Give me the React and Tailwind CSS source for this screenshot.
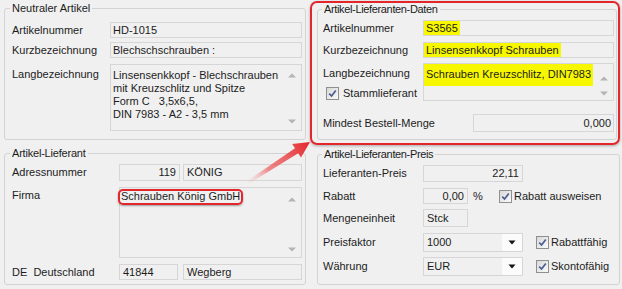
import React from "react";

const Check = () => (
  <span className="inline-flex w-[13px] h-[13px] shrink-0 items-center justify-center border border-[#8e8f8f] bg-gradient-to-br from-[#d8d8d8] to-[#fafafa]">
    <svg width="9" height="9" viewBox="0 0 9 9">
      <path d="M1.2 4.6 L3.6 7 L7.8 1.4" fill="none" stroke="#4b5f8f" strokeWidth="1.7" />
    </svg>
  </span>
);

const Up = () => (
  <svg width="8" height="5" viewBox="0 0 8 5"><path d="M0 4.5 L4 0.5 L8 4.5 Z" fill="#b4b4b4" /></svg>
);
const Down = () => (
  <svg width="8" height="5" viewBox="0 0 8 5"><path d="M0 0.5 L4 4.5 L8 0.5 Z" fill="#b4b4b4" /></svg>
);

const Scroll = ({ pt = "pt-[8px]", pb = "pb-[6px]" }) => (
  <div className={`w-[18px] flex flex-col justify-between items-center ${pt} ${pb}`}>
    <Up />
    <Down />
  </div>
);

const Field = ({ className = "", children }) => (
  <div className={`border border-[#d6d6d6] bg-[#f0f0f0] flex items-center ${className}`}>{children}</div>
);

const Combo = ({ value }) => (
  <div className="w-[100px] h-[19px] border border-[#d6d6d6] flex">
    <div className="flex-1 bg-[#f0f0f0] flex items-center pl-[3px]">{value}</div>
    <div className="w-[20px] bg-[#fbfbfb] flex items-center justify-center">
      <svg width="8" height="5" viewBox="0 0 8 5"><path d="M0.5 0.5 L4 4.5 L7.5 0.5 Z" fill="#111" /></svg>
    </div>
  </div>
);

export default function App() {
  return (
    <div className="relative w-[622px] h-[289px] bg-[#f0f0f0] text-[11px] leading-[13px] text-[#1c1c1c] font-['Liberation_Sans',Arial,sans-serif] flex overflow-hidden">
      {/* Left column */}
      <div className="ml-[4px] w-[302px] flex flex-col">
        <fieldset className="mt-[2px] border border-[#d3d3d3] rounded-[3px] pl-[5px] pr-[3px] pt-[7px] pb-[8px]">
          <legend className="px-[2px] leading-[13px]">Neutraler Artikel</legend>
          <div className="flex items-center pl-[2px]">
            <span className="w-[98px]">Artikelnummer</span>
            <Field className="flex-1 h-[16px] pl-[2px]">HD-1015</Field>
          </div>
          <div className="flex items-center pl-[2px] mt-[4px]">
            <span className="w-[98px]">Kurzbezeichnung</span>
            <Field className="flex-1 h-[16px] pl-[2px]">Blechschschrauben :</Field>
          </div>
          <div className="flex items-start pl-[2px] mt-[6px]">
            <span className="w-[98px] pt-[4px]">Langbezeichnung</span>
            <div className="flex-1 h-[67px] border border-[#d6d6d6] bg-[#f0f0f0] flex">
              <div className="flex-1 pl-[2px] pt-[4px]">
                Linsensenkkopf - Blechschrauben
                <br />
                mit Kreuzschlitz und Spitze
                <br />
                Form C&nbsp;&nbsp;&nbsp;3,5x6,5,
                <br />
                DIN 7983 - A2 - 3,5 mm
              </div>
              <Scroll />
            </div>
          </div>
        </fieldset>

        <fieldset className="mt-[7px] border border-[#d3d3d3] rounded-[3px] pl-[5px] pr-[3px] pt-[4px] pb-[4px]">
          <legend className="px-[2px] leading-[13px] tracking-[-0.2px]">Artikel-Lieferant</legend>
          <div className="flex items-center pl-[2px]">
            <span className="w-[107px]">Adressnummer</span>
            <Field className="w-[61px] h-[17px] justify-end pr-[3px]">119</Field>
            <Field className="flex-1 ml-[3px] h-[17px] pl-[3px]">KÖNIG</Field>
          </div>
          <div className="flex items-start pl-[2px] mt-[6px]">
            <span className="w-[107px] pt-[2px]">Firma</span>
            <div className="flex-1 h-[71px] border border-[#d6d6d6] bg-[#f0f0f0] flex">
              <div className="flex-1 pt-[1px]">
                <span className="inline-block -ml-[2px] border-2 border-[#e3262c] rounded-[5px] px-[1px] leading-[11px] pb-[1px] shadow-[0_1px_2px_rgba(0,0,0,0.35)]">
                  Schrauben König GmbH
                </span>
              </div>
              <Scroll pt="pt-[9px]" pb="pb-[5px]" />
            </div>
          </div>
          <div className="flex items-center pl-[2px] mt-[6px]">
            <span className="w-[107px]">DE&nbsp;&nbsp;Deutschland</span>
            <Field className="w-[59px] h-[16px] pl-[3px]">41844</Field>
            <Field className="flex-1 ml-[5px] h-[16px] pl-[3px]">Wegberg</Field>
          </div>
        </fieldset>
      </div>

      {/* Right column */}
      <div className="ml-[4px] w-[310px] flex flex-col">
        <div className="mt-[1px] border-2 border-[#e3262c] rounded-[7px] pl-[5px] pr-[1px] pb-[3px] shadow-[0_1px_3px_rgba(0,0,0,0.3)]">
          <fieldset className="border border-[#d3d3d3] rounded-[3px] pl-[4px] pr-[2px] pt-[4px] pb-[7px]">
            <legend className="px-[2px] leading-[13px] tracking-[-0.35px]">Artikel-Lieferanten-Daten</legend>
            <div className="flex items-center pl-[1px]">
              <span className="w-[100px]">Artikelnummer</span>
              <Field className="flex-1 h-[16px]">
                <span className="bg-[#f7f700] h-[14px] flex items-center px-[2px]">S3565</span>
              </Field>
            </div>
            <div className="flex items-center pl-[1px] mt-[6px]">
              <span className="w-[100px]">Kurzbezeichnung</span>
              <Field className="flex-1 h-[16px]">
                <span className="bg-[#f7f700] h-[14px] flex items-center px-[2px]">Linsensenkkopf Schrauben</span>
              </Field>
            </div>
            <div className="flex items-start pl-[1px] mt-[5px]">
              <div className="w-[100px] flex flex-col">
                <span className="pt-[4px]">Langbezeichnung</span>
                <div className="flex items-center mt-[7px] ml-[3px]">
                  <Check />
                  <span className="ml-[4px]">Stammlieferant</span>
                </div>
              </div>
              <div className="flex-1 h-[38px] border border-[#d6d6d6] bg-[#f0f0f0] flex">
                <div className="flex-1">
                  <span className="inline-block bg-[#f7f700] pt-[4px] pb-[5px] px-[2px]">Schrauben Kreuzschlitz, DIN7983</span>
                </div>
                <Scroll pt="pt-[12px]" pb="pb-[4px]" />
              </div>
            </div>
            <div className="flex items-center pl-[1px] mt-[13px]">
              <span>Mindest Bestell-Menge</span>
              <Field className="ml-auto w-[141px] h-[18px] justify-end pr-[2px]">0,000</Field>
            </div>
          </fieldset>
        </div>

        <fieldset className="mt-[3px] ml-[7px] border border-[#d3d3d3] rounded-[3px] pl-[4px] pr-[2px] pt-[4px] pb-[8px]">
          <legend className="px-[2px] leading-[13px] tracking-[-0.35px]">Artikel-Lieferanten-Preis</legend>
          <div className="flex items-center pl-[1px]">
            <span className="w-[100px]">Lieferanten-Preis</span>
            <Field className="w-[100px] h-[17px] justify-end pr-[3px]">22,11</Field>
          </div>
          <div className="flex items-center pl-[1px] mt-[6px]">
            <span className="w-[100px]">Rabatt</span>
            <Field className="w-[45px] h-[16px] justify-end pr-[3px]">0,00</Field>
            <span className="w-[31px] pl-[5px]">%</span>
            <Check />
            <span className="ml-[2px]">Rabatt ausweisen</span>
          </div>
          <div className="flex items-center pl-[1px] mt-[5px]">
            <span className="w-[100px]">Mengeneinheit</span>
            <Field className="w-[45px] h-[18px] pl-[3px]">Stck</Field>
          </div>
          <div className="flex items-center pl-[1px] mt-[6px]">
            <span className="w-[100px]">Preisfaktor</span>
            <Combo value="1000" />
            <span className="ml-[13px]"><Check /></span>
            <span className="ml-[2px]">Rabattfähig</span>
          </div>
          <div className="flex items-center pl-[1px] mt-[5px]">
            <span className="w-[100px]">Währung</span>
            <Combo value="EUR" />
            <span className="ml-[13px]"><Check /></span>
            <span className="ml-[2px]">Skontofähig</span>
          </div>
        </fieldset>
      </div>

      {/* Red arrow overlay */}
      <svg className="absolute left-0 top-0 pointer-events-none" width="622" height="289" viewBox="0 0 622 289">
        <defs>
          <linearGradient id="ag" x1="246" y1="183" x2="310" y2="142" gradientUnits="userSpaceOnUse">
            <stop offset="0" stopColor="#f3b0b0" stopOpacity="0" />
            <stop offset="0.35" stopColor="#ec5a5a" stopOpacity="0.7" />
            <stop offset="1" stopColor="#e3262c" />
          </linearGradient>
        </defs>
        <polygon
          points="310,142 301,157.4 298.2,153.2 247.8,184.3 246.2,181.7 295,148.2 292.2,144"
          fill="url(#ag)"
        />
      </svg>
    </div>
  );
}
